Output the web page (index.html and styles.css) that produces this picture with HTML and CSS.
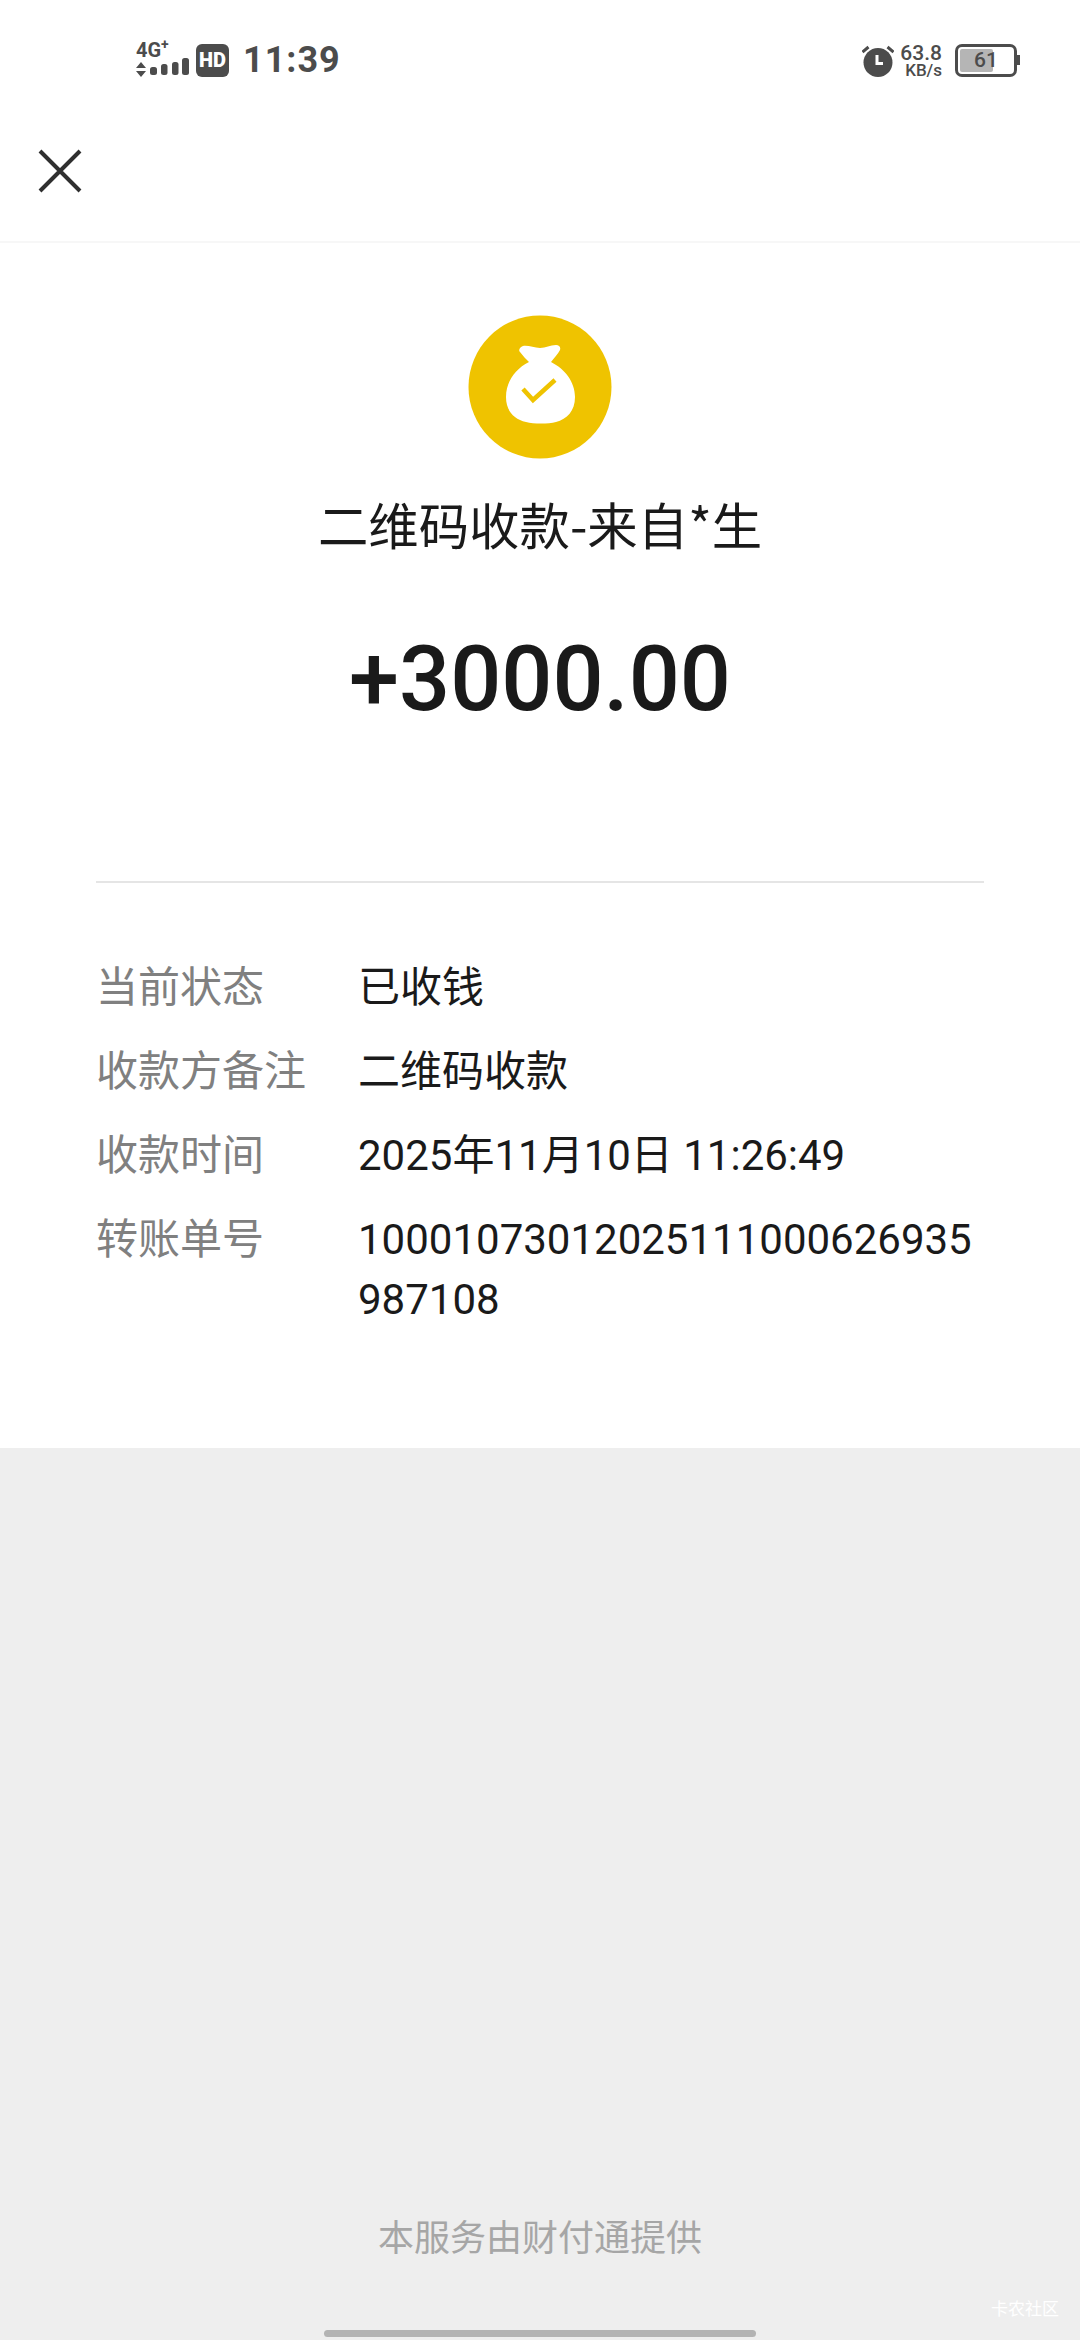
FILE: index.html
```html
<!DOCTYPE html>
<html lang="zh-CN">
<head>
    <meta charset="UTF-8">
    <meta name="viewport" content="width=device-width, initial-scale=1.0">
    <title>收款详情</title>
    <link rel="stylesheet" href="styles.css">
</head>
<body>
    <div class="page">
        <!-- Status bar -->
        <header class="status-bar">
            <div class="status-left">
                <div class="signal">
                    <span class="net-type">4G<sup>+</sup></span>
                    <svg class="signal-bars" width="53" height="19" viewBox="0 0 53 19">
                        <path d="M5 4l5 6H0zM0 13h10l-5 6z" fill="#4c4c4c"/>
                        <rect x="14" y="9" width="7" height="8" rx="2.500" fill="#4c4c4c"/>
                        <rect x="25" y="6" width="6.500" height="11" rx="2.500" fill="#4c4c4c"/>
                        <rect x="36" y="4" width="6.500" height="13" rx="2.500" fill="#4c4c4c"/>
                        <rect x="46" y="0" width="7" height="17" rx="2.500" fill="#4c4c4c"/>
                    </svg>
                </div>
                <span class="hd-badge">HD</span>
                <span class="clock">11:39</span>
            </div>
            <div class="status-right">
                <svg class="alarm" width="32" height="34" viewBox="0 0 32 34">
                    <circle cx="16" cy="19.500" r="14.500" fill="#4c4c4c"/>
                    <path d="M0.500 9l6-5M31.500 9l-6-5" stroke="#4c4c4c" stroke-width="3" fill="none"/>
                    <path d="M15 12v8.500h6" stroke="#fff" stroke-width="3" fill="none"/>
                </svg>
                <div class="speed">
                    <span>63.8</span>
                    <span class="speed-unit">KB/s</span>
                </div>
                <div class="battery">
                    <div class="battery-body">
                        <div class="battery-fill"></div>
                        <span class="battery-num">61</span>
                    </div>
                    <div class="battery-tip"></div>
                </div>
            </div>
        </header>

        <!-- Close bar -->
        <nav class="top-bar">
            <svg width="44" height="44" viewBox="0 0 44 44">
                <path d="M2 2l40 40M42 2L2 42" stroke="#2f2f2f" stroke-width="4" fill="none"/>
            </svg>
        </nav>

        <!-- Payment summary -->
        <section class="summary">
            <svg class="bag-icon" width="144" height="144" viewBox="0 0 144 144">
                <circle cx="72" cy="72" r="71.500" fill="#efc300"/>
                <path d="M55 31C52 32 50 35 52 37C55 41 58 44 61 47C47 54 38 67 38 82C38 96 46 104 58 107C66 109 80 109 88 107C99 104 107 96 107 82C107 67 97 54 83 47C86 43 90 39 92 35C93 32 91 30 88 30C82 30 78 33 72 33C66 33 60 30 55 31Z" fill="#fff"/>
                <path d="M55 74l10 11 22-20" stroke="#efc300" stroke-width="4.500" fill="none"/>
            </svg>
            <h1 class="title">二维码收款-来自*生</h1>
            <div class="amount">+3000.00</div>
        </section>

        <!-- Details -->
        <section class="details">
            <div class="detail-row">
                <div class="detail-label">当前状态</div>
                <div class="detail-value">已收钱</div>
            </div>
            <div class="detail-row">
                <div class="detail-label">收款方备注</div>
                <div class="detail-value">二维码收款</div>
            </div>
            <div class="detail-row">
                <div class="detail-label">收款时间</div>
                <div class="detail-value">2025年11月10日 11:26:49</div>
            </div>
            <div class="detail-row">
                <div class="detail-label">转账单号</div>
                <div class="detail-value">10001073012025111000626935987108</div>
            </div>
        </section>

        <!-- Footer -->
        <footer class="footer">
            <p class="provider">本服务由财付通提供</p>
            <span class="watermark">卡农社区</span>
            <div class="home-bar"></div>
        </footer>
    </div>
</body>
</html>
```

FILE: styles.css
```css
/* Global Styles */
* {
    margin: 0;
    padding: 0;
    box-sizing: border-box;
}

body {
    font-family: "Noto Sans CJK SC", Roboto, sans-serif;
    background-color: #eeeeee;
    color: #1a1a1a;
}

.page {
    display: flex;
    flex-direction: column;
    width: 1080px;
    height: 2340px;
}

/* Status Bar */
.status-bar {
    display: flex;
    justify-content: space-between;
    align-items: center;
    height: 120px;
    padding: 0 60px 0 136px;
    background-color: #fff;
    color: #4c4c4c;
    font-family: Roboto, sans-serif;
}

.status-left,
.status-right {
    display: flex;
    align-items: center;
}

.signal {
    display: flex;
    flex-direction: column;
    width: 53px;
}

.net-type {
    height: 15px;
    font-size: 20px;
    font-weight: 700;
    line-height: 15px;
}

.net-type sup {
    font-size: 14px;
    line-height: 0;
}

.hd-badge {
    width: 33px;
    height: 33px;
    margin-left: 7px;
    border-radius: 6px;
    background: #4c4c4c;
    color: #fff;
    font-size: 20px;
    font-weight: 900;
    line-height: 33px;
    text-align: center;
}

.clock {
    margin-left: 14px;
    font-size: 36px;
    font-weight: 700;
    letter-spacing: 1px;
}

.speed {
    display: flex;
    flex-direction: column;
    align-items: flex-end;
    margin-left: 6px;
    font-size: 21px;
    font-weight: 500;
    line-height: 20px;
}

.speed-unit {
    font-size: 17px;
    line-height: 15px;
}

.battery {
    display: flex;
    align-items: center;
    margin-left: 13px;
}

.battery-body {
    position: relative;
    width: 62px;
    height: 33px;
    padding: 2px;
    border: 3px solid #4c4c4c;
    border-radius: 7px;
}

.battery-fill {
    width: 33px;
    height: 100%;
    background: #b5b5b5;
    border-radius: 2px;
}

.battery-num {
    position: absolute;
    top: 0;
    left: 16px;
    font-size: 21px;
    font-weight: 500;
    line-height: 27px;
}

.battery-tip {
    width: 3px;
    height: 10px;
    background: #4c4c4c;
}

/* Close Bar */
.top-bar {
    display: flex;
    align-items: center;
    height: 123px;
    padding-left: 38px;
    padding-bottom: 19px;
    background: #fff;
    border-bottom: 2px solid #f7f7f7;
}

/* Summary */
.summary {
    display: flex;
    flex-direction: column;
    align-items: center;
    height: 640px;
    padding-top: 72px;
    background: #fff;
}

.title {
    margin-top: 29px;
    font-size: 50.400px;
    font-weight: 400;
    line-height: 72px;
}

.amount {
    margin-top: 70px;
    font-family: Roboto, sans-serif;
    font-size: 90px;
    font-weight: 500;
    line-height: 100px;
}

/* Details */
.details {
    display: flex;
    flex-direction: column;
    gap: 24px;
    height: 567px;
    padding: 77px 96px 0;
    margin-top: -2px;
    background: linear-gradient(#e5e5e5, #e5e5e5) 96px 0 / 888px 2px no-repeat #fff;
}

.detail-row {
    display: flex;
    font-family: Roboto, "Noto Sans CJK SC", sans-serif;
    font-size: 42px;
    line-height: 60px;
}

.detail-label {
    flex: 0 0 262px;
    color: #808080;
}

.detail-value {
    flex: 1;
    word-break: break-all;
}

/* Footer */
.footer {
    position: relative;
    flex: 1;
    background: #eeeeee;
}

.provider {
    position: absolute;
    left: 0;
    right: 0;
    bottom: 77px;
    color: #a6a6a6;
    font-size: 36px;
    line-height: 56px;
    text-align: center;
}

.watermark {
    position: absolute;
    right: 21px;
    bottom: 21px;
    color: #fff;
    font-size: 17px;
    line-height: 22px;
}

.home-bar {
    position: absolute;
    left: 324px;
    bottom: 3px;
    width: 432px;
    height: 7px;
    border-radius: 4px;
    background: #b3b3b3;
}
```
